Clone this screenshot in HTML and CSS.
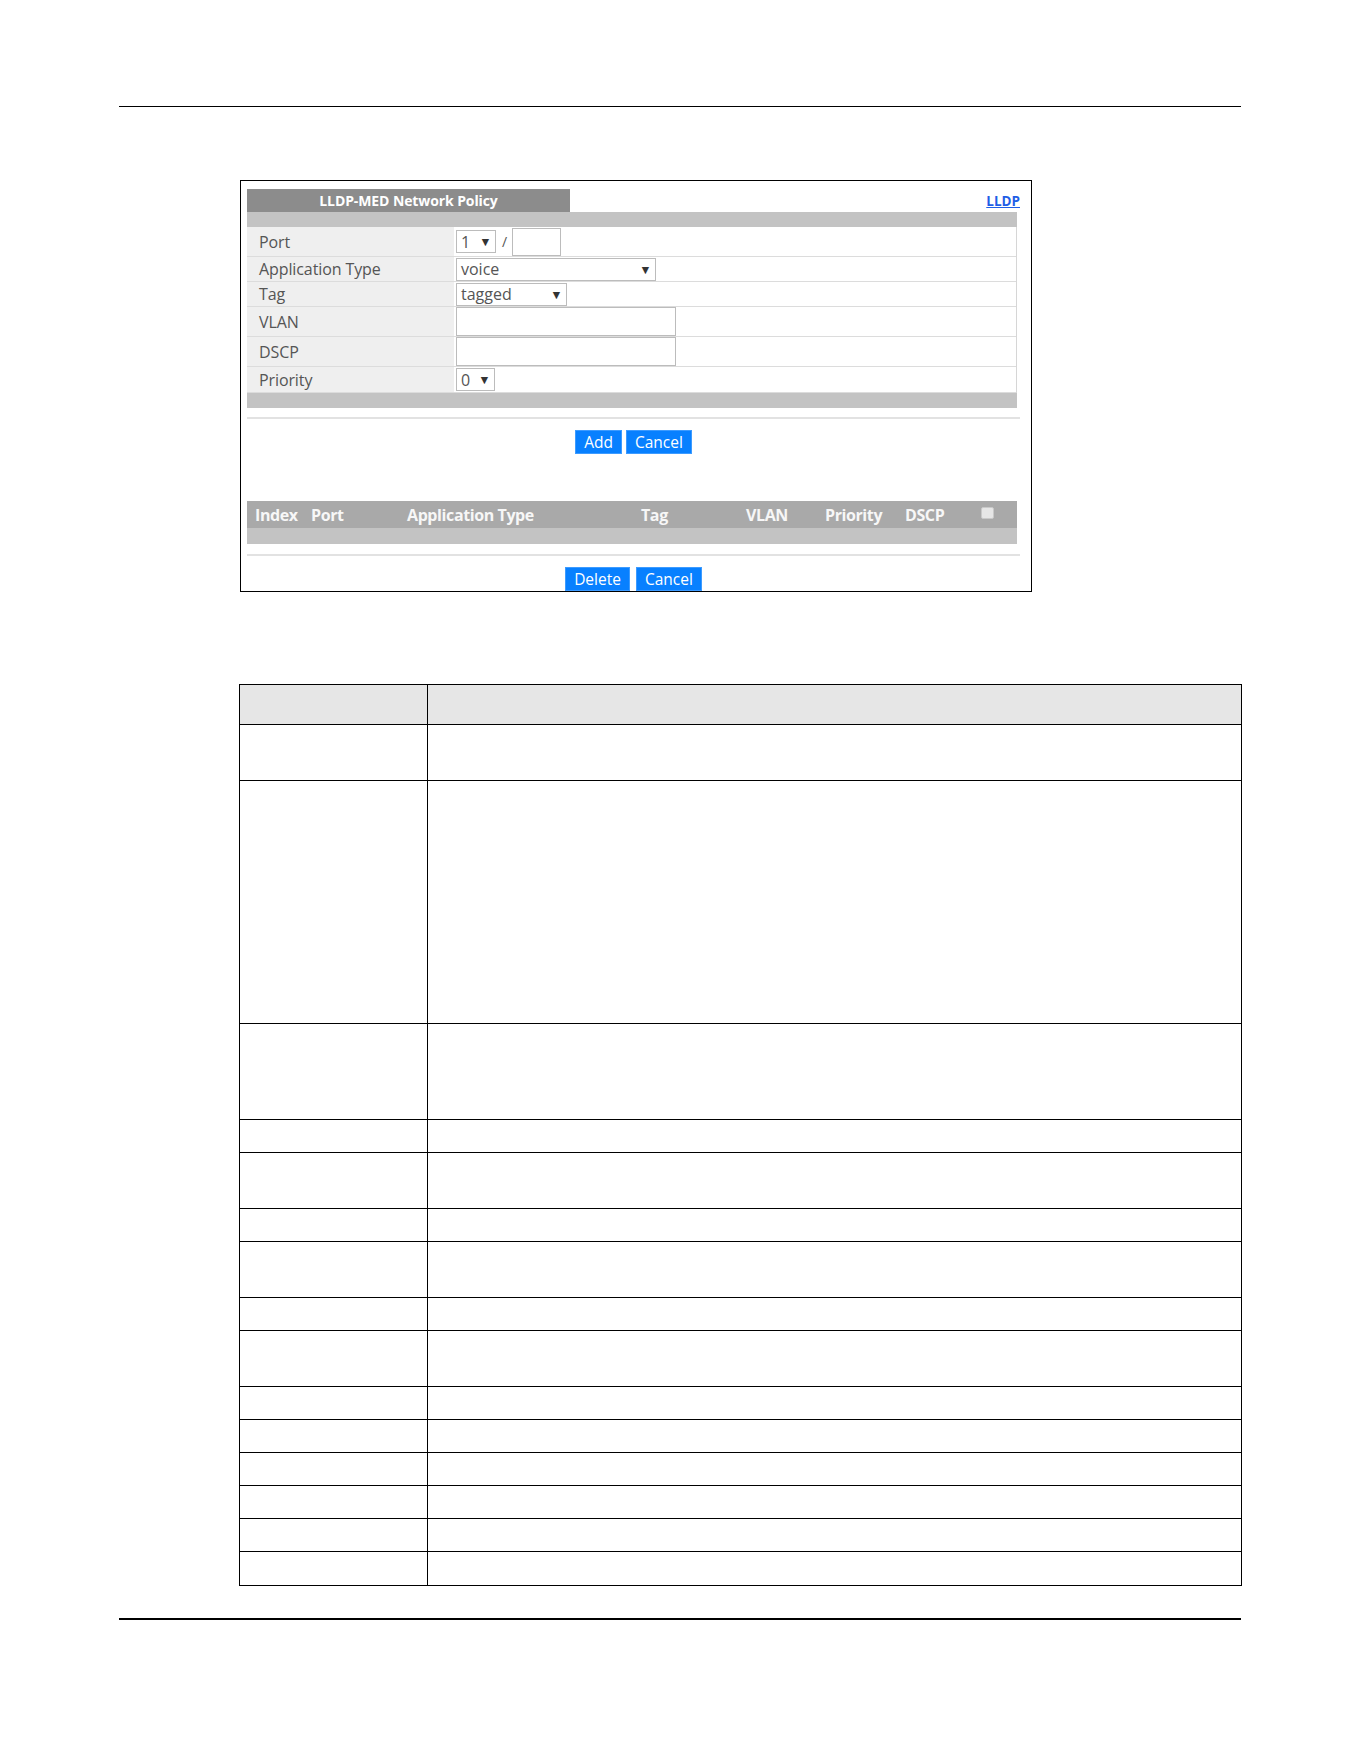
FILE: index.html
```html
<!DOCTYPE html>
<html>
    <head>
        <title>LLDP-MED Network Policy</title>
        <link rel="stylesheet" href="styles.css">
    </head>
    <body>
        <div class="page">
            <div class="rule"></div>

            <div class="screen">
                <div class="screen-inner">
                    <div class="title-row">
                        <div class="tab">LLDP-MED Network Policy</div>
                        <a class="link" href="#">LLDP</a>
                    </div>
                    <div class="bar"></div>

                    <div class="form">
                        <div class="form-row row-port">
                            <div class="label">Port</div>
                            <div class="value">
                                <span class="select sel-port">1 <span class="caret">&#9660;</span></span>
                                <span class="slash">/</span>
                                <input class="text text-port" type="text">
                            </div>
                        </div>
                        <div class="form-row row-short">
                            <div class="label">Application Type</div>
                            <div class="value">
                                <span class="select sel-app">voice <span class="caret">&#9660;</span></span>
                            </div>
                        </div>
                        <div class="form-row row-short">
                            <div class="label">Tag</div>
                            <div class="value">
                                <span class="select sel-tag">tagged <span class="caret">&#9660;</span></span>
                            </div>
                        </div>
                        <div class="form-row row-input">
                            <div class="label">VLAN</div>
                            <div class="value"><input class="text text-wide" type="text"></div>
                        </div>
                        <div class="form-row row-input">
                            <div class="label">DSCP</div>
                            <div class="value"><input class="text text-wide" type="text"></div>
                        </div>
                        <div class="form-row row-prio">
                            <div class="label">Priority</div>
                            <div class="value">
                                <span class="select sel-prio">0 <span class="caret">&#9660;</span></span>
                            </div>
                        </div>
                    </div>
                    <div class="bar"></div>

                    <div class="sep"></div>
                    <div class="buttons">
                        <button>Add</button><button>Cancel</button>
                    </div>

                    <div class="list-head">
                        <span>Index</span>
                        <span>Port</span>
                        <span>Application Type</span>
                        <span>Tag</span>
                        <span>VLAN</span>
                        <span>Priority</span>
                        <span>DSCP</span>
                        <span class="check"></span>
                    </div>
                    <div class="list-bar"></div>

                    <div class="sep sep-list"></div>
                    <div class="buttons wide">
                        <button>Delete</button><button>Cancel</button>
                    </div>
                </div>
            </div>

            <div class="desc">
                <div class="drow head"><div></div><div></div></div>
                <div class="drow l2"><div></div><div></div></div>
                <div class="drow l10"><div></div><div></div></div>
                <div class="drow l3"><div></div><div></div></div>
                <div class="drow l1"><div></div><div></div></div>
                <div class="drow l2"><div></div><div></div></div>
                <div class="drow l1"><div></div><div></div></div>
                <div class="drow l2"><div></div><div></div></div>
                <div class="drow l1"><div></div><div></div></div>
                <div class="drow l2"><div></div><div></div></div>
                <div class="drow l1"><div></div><div></div></div>
                <div class="drow l1"><div></div><div></div></div>
                <div class="drow l1"><div></div><div></div></div>
                <div class="drow l1"><div></div><div></div></div>
                <div class="drow l1"><div></div><div></div></div>
                <div class="drow l1"><div></div><div></div></div>
            </div>

            <div class="rule rule-bottom"></div>
        </div>
    </body>
</html>
```

FILE: styles.css
```css
body {
    margin: 0;
    font-family: "Open Sans", sans-serif;
    background: #fff;
}

.page {
    width: 1122px;
    margin-left: 119px;
    padding-top: 106px;
}

.rule {
    height: 1px;
    background: #000;
}

.rule-bottom {
    height: 2px;
    margin-top: 32px;
}

/* the screen capture */
.screen {
    width: 792px;
    height: 412px;
    margin: 73px 0 0 121px;
    border: 1px solid #000;
    box-sizing: border-box;
    overflow: hidden;
}

.screen-inner {
    margin: 8px 11px 0 6px;
}

.title-row {
    display: flex;
    justify-content: space-between;
    align-items: center;
    height: 23px;
}

.tab {
    width: 323px;
    height: 23px;
    line-height: 24px;
    background: #8c8c8c;
    color: #fff;
    font-weight: bold;
    font-size: 14px;
    text-align: center;
    letter-spacing: -0.1px;
}

.link {
    color: #1f5ee6;
    font-weight: bold;
    font-size: 13.5px;
}

.bar {
    width: 770px;
    height: 15px;
    background: #c3c3c3;
}

.form {
    width: 770px;
    border-right: 1px solid #d6d6d6;
    box-sizing: border-box;
}

.form-row {
    display: grid;
    grid-template-columns: 207px 1fr;
    border-bottom: 1px solid #dcdcdc;
    box-sizing: border-box;
}

.row-port {
    height: 30px;
}

.row-short {
    height: 25px;
}

.row-input {
    height: 30px;
}

.row-prio {
    height: 26px;
}

.label {
    display: flex;
    align-items: center;
    padding-left: 12px;
    background: #efefef;
    color: #555;
    font-size: 16px;
    letter-spacing: -0.1px;
}

.value {
    display: flex;
    align-items: center;
    padding-left: 2px;
}

.select {
    display: inline-flex;
    align-items: center;
    justify-content: space-between;
    height: 23px;
    padding: 0 6px 0 4px;
    border: 1px solid #bcbcbc;
    box-sizing: border-box;
    background: #fff;
    color: #555;
    font-size: 16px;
}

.caret {
    font-family: "DejaVu Sans", sans-serif;
    font-size: 9.5px;
    color: #333;
}

.sel-port {
    width: 40px;
}

.sel-app {
    width: 200px;
}

.sel-tag {
    width: 111px;
}

.sel-prio {
    width: 39px;
}

.slash {
    margin: 0 5px 0 6px;
    color: #555;
    font-size: 14px;
}

.text {
    margin: 0;
    padding: 0;
    border: 1px solid #bcbcbc;
    box-sizing: border-box;
    background: #fff;
}

.text-port {
    width: 49px;
    height: 28px;
}

.text-wide {
    width: 220px;
    height: 29px;
}

.sep {
    height: 2px;
    margin-top: 9px;
    background: #e2e2e2;
}

.sep-list {
    margin-top: 10px;
}

.buttons {
    display: flex;
    justify-content: center;
    gap: 4px;
    margin-top: 11px;
}

.buttons.wide {
    gap: 6px;
}

button {
    height: 24px;
    padding: 0 8px;
    border: 1px solid #3d9bff;
    background: #0880ff;
    color: #fff;
    font-family: "Open Sans", sans-serif;
    font-size: 15.5px;
    line-height: 20px;
}

/* list table */
.list-head {
    display: grid;
    grid-template-columns: 56px 96px 234px 105px 79px 80px 76px 1fr;
    align-items: center;
    width: 770px;
    height: 27px;
    margin-top: 47px;
    padding-left: 8px;
    box-sizing: border-box;
    background: #a9a9a9;
    color: #f7f7f7;
    font-weight: bold;
    font-size: 16px;
    letter-spacing: -0.4px;
}

.check {
    width: 11px;
    height: 10px;
    margin-top: -3px;
    border: 1px solid #c9c9c9;
    border-radius: 2px;
    background: #e6e6e6;
}

.list-bar {
    width: 770px;
    height: 16px;
    background: #c3c3c3;
}

/* description table */
.desc {
    width: 1003px;
    margin: 92px 0 0 120px;
    border: 1px solid #000;
    box-sizing: border-box;
}

.drow {
    display: grid;
    grid-template-columns: 188px 1fr;
    border-bottom: 1px solid #000;
    box-sizing: border-box;
}

.drow:last-child {
    border-bottom: none;
}

.drow > div:first-child {
    border-right: 1px solid #000;
}

.drow.head {
    height: 40px;
    background: #e6e6e6;
}

.l1 {
    height: 33px;
}

.l2 {
    height: 56px;
}

.l3 {
    height: 96px;
}

.l10 {
    height: 243px;
}
```
